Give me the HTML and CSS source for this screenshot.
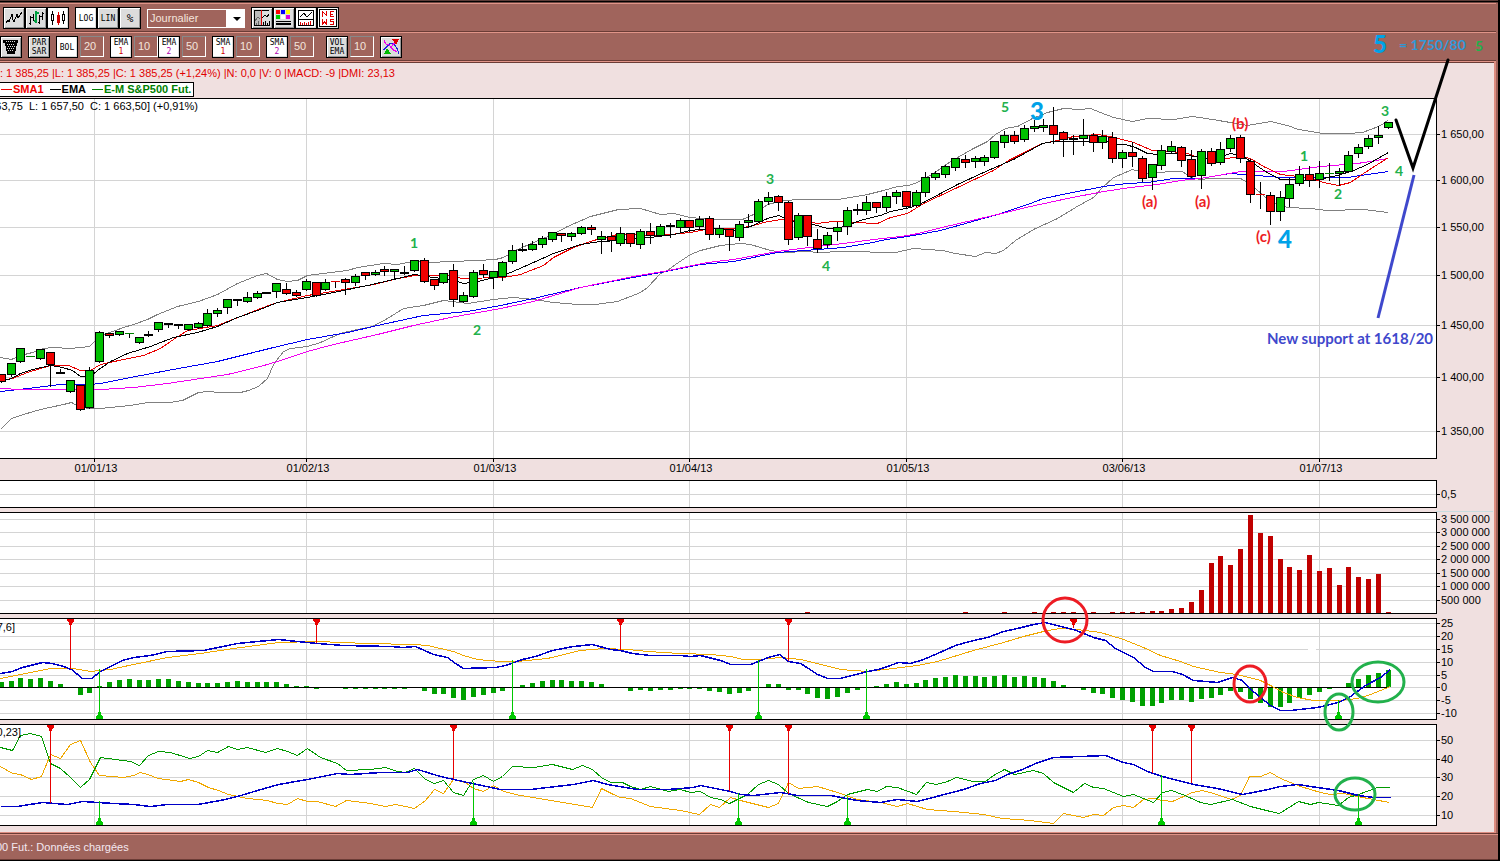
FILE: index.html
```
<!DOCTYPE html>
<html lang="fr">
<head>
<meta charset="utf-8">
<title>E-M S&amp;P500 Fut.</title>
<link rel="stylesheet" href="styles.css">
</head>
<body>
<div class="window">
  <header class="toolbars">
    <div class="toolbar">
      <div class="group">
        <button class="tool" aria-label="Ligne"><svg viewBox="0 0 18 18"><path class="k" d="M1 14l2-3 1 2 3-8 1 6 1 2 3-8 1 4 4-6"/></svg></button>
        <button class="tool" aria-label="Barres"><svg viewBox="0 0 18 18"><path class="k" d="M3.500 7v9M2 14h1M3 8h3M6.500 5v7M12.500 6v9M11 13h1M12 7h3M15.500 3v8M15 4h2"/><path class="g" d="M9 2v12M7 12h2M9 4h3"/></svg></button>
        <button class="tool on" aria-label="Chandeliers"><svg viewBox="0 0 18 18"><path class="k" d="M3.500 2v14M14.500 2v13"/><path class="k w" d="M2.500 5.500h2v6h-2zM13.500 5.500h2v6h-2z"/><path class="r" d="M9.500 3v13"/><path fill="#d00000" d="M8 6h3v8H8z"/></svg></button>
      </div>
      <div class="group">
        <button class="tool on">LOG</button><button class="tool">LIN</button><button class="tool"><span class="percent">%</span></button>
      </div>
      <label class="period"><select aria-label="Période"><option>Journalier</option></select></label>
      <div class="group">
        <button class="tool" aria-label="Curseur"><svg viewBox="0 0 18 18"><path fill="#bbb" d="M1 1h7v15H1z"/><path class="k" d="M1.500 1v15.500H17M1 1.500h15M9 9l3-3 2 2 2-3M10.500 16v-3M12.500 16v-4M14.500 16v-2M16.500 16v-4"/><path class="gr" d="M2 12l3-4 2 2M3.500 16v-2M5.500 16v-4"/><path class="r" d="M8.500 1v15"/></svg></button>
        <button class="tool" aria-label="Couleurs"><svg viewBox="0 0 18 18"><path fill="#f00" d="M1 1h4v4H1z"/><path fill="#00f" d="M6 1h4v4H6z"/><path fill="#ff0" d="M11 1h4v4h-4z"/><path fill="#0c0" d="M1 6h4v4H1z"/><path fill="#fff" d="M6 6h4v4H6z"/><path fill="#d0d" d="M11 6h4v4h-4z"/><path fill="#000" d="M1 12h15v1H1zM1 14h15v2H1z"/></svg></button>
        <button class="tool on" aria-label="Indicateurs"><svg viewBox="0 0 18 18"><path class="k" d="M1.500 1.500h15v15h-15zM1 10.500h16M3 8l4-4 3 4 5-5"/><path class="r" d="M3.500 16v-3M5.500 16v-2M7.500 16v-3M9.500 16v-2M11.500 16v-3M13.500 16v-4"/></svg></button>
        <button class="tool on" aria-label="News"><svg viewBox="0 0 18 18"><path class="k" d="M.5.5h17v17H.5z"/><path class="r" d="M3.500 8V2.500l4 4V2M15 2.500h-4v5h4M11 5.500h3M3.500 10v5l2-2 2 2v-5M15 10.500h-3.500v2h3v3H11"/></svg></button>
      </div>
    </div>
    <div class="toolbar">
      <button class="tool" aria-label="Supprimer"><svg viewBox="0 0 18 18"><path fill="#000" d="M1 2h15v3h-1l-2 11H5L3 5H1z"/><path stroke="#ddd" stroke-dasharray="1 1" d="M5 6.500h8M6 8.500h7M5 10.500h7M6 12.500h6M4 3.500h9"/></svg></button>
      <button class="tool"><span>PAR</span><span>SAR</span></button>
      <div class="pair"><button class="tool on">BOL</button><input value="20" aria-label="Bollinger"></div>
      <div class="group">
        <div class="pair"><button class="tool on"><span>EMA</span><span class="one">1</span></button><input value="10" aria-label="EMA 1"></div>
        <div class="pair"><button class="tool on"><span>EMA</span><span class="two">2</span></button><input value="50" aria-label="EMA 2"></div>
      </div>
      <div class="pair"><button class="tool on"><span>SMA</span><span class="one">1</span></button><input value="10" aria-label="SMA 1"></div>
      <div class="pair"><button class="tool on"><span>SMA</span><span class="two">2</span></button><input value="50" aria-label="SMA 2"></div>
      <div class="pair spaced"><button class="tool"><span>VOL</span><span>EMA</span></button><input value="10" aria-label="Volume EMA"></div>
      <button class="tool" aria-label="Signaux"><svg viewBox="0 0 18 18"><path stroke="#22d" d="M1 12c3-1 5-6 8-7 3 0 6 4 8 11"/><path stroke="#e0e" d="M2 2c2 7 4 3 6 6s4 6 7 5"/><path stroke="#e0e" d="M9 9l5-6"/><path fill="#e00000" d="M10 1h7l-3 6z"/><path fill="#0b0" d="M2 16l3-6 4 6z"/></svg></button>
    </div>
  </header>
  <main class="workspace">
    <div class="info">
      <p class="quote">: 1 385,25 |L: 1 385,25 |C: 1 385,25 (+1,24%) |N: 0,0 |V: 0 |MACD: -9 |DMI: 23,13</p>
      <p class="legend"><span class="key sma">SMA1</span><span class="key ema">EMA</span><span class="key fut">E-M S&amp;P500 Fut.</span></p>
    </div>
    <div class="charts">
      <svg id="price" viewBox="0 98 1494 382"></svg>
      <svg id="blank" viewBox="0 480 1494 32"></svg>
      <svg id="volume" viewBox="0 512 1494 106"></svg>
      <svg id="macd" viewBox="0 618 1494 106"></svg>
      <svg id="dmi" viewBox="0 724 1494 108"></svg>
      <svg class="notes" viewBox="0 98 1494 734">
        <g class="rings">
          <ellipse class="red" cx="1065" cy="620" rx="22" ry="22"/>
          <ellipse class="red" cx="1250" cy="684" rx="16" ry="18"/>
          <ellipse cx="1339" cy="712" rx="14" ry="18"/>
          <ellipse cx="1378" cy="682" rx="26" ry="20"/>
          <ellipse cx="1355" cy="794" rx="20" ry="16"/>
        </g>
        <path class="forecast" d="M1396 120l17 48 35-108"/>
        <path class="support" d="M1414 175l-36 143"/>
        <g class="minor">
          <text x="410" y="248">1</text><text x="473" y="335">2</text><text x="766" y="184">3</text><text x="822" y="271">4</text><text x="1001" y="112">5</text>
          <text x="1300" y="161">1</text><text x="1334" y="199">2</text><text x="1381" y="116">3</text><text x="1395" y="176">4</text><text x="1475" y="51">5</text>
        </g>
        <g class="abc">
          <text x="1142" y="207">(a)</text><text x="1195" y="207">(a)</text><text x="1232" y="129">(b)</text><text x="1256" y="242">(c)</text>
        </g>
        <g class="major">
          <text x="1030" y="120">3</text><text x="1278" y="248">4</text><text x="1373" y="53">5</text>
        </g>
        <text class="target" x="1399" y="50">= 1750/80</text>
        <text class="level" x="1267" y="344">New support at 1618/20</text>
      </svg>
    </div>
  </main>
  <footer class="status">00 Fut.: Données chargées</footer>
</div>
<script src="chart.js"></script>
</body>
</html>
```
FILE: styles.css
```
* { box-sizing: border-box; }
body { margin: 0; background: #5c3c38; font-family: "Liberation Sans", Arial, sans-serif; font-size: 11px; overflow-x: hidden; }
.window { min-height: 100vh; display: flex; flex-direction: column; border-right: 2px solid #000; border-bottom: 1px solid #000; background: #a0645c; overflow: hidden; }
.window::before { content: ""; height: 3px; background: linear-gradient(#5c3c38 0 1px, #000 1px 2px, #6b4540 2px); }
.toolbars { margin-right: 2px; border-bottom: 1px solid #e09488; }
.toolbar { height: 29px; display: flex; align-items: center; gap: 6px; padding-top: 1px; border-top: 1px solid #e09488; border-bottom: 1px solid #6b3c36; }
.toolbar:first-child { padding-left: 3px; }
.group { display: flex; }
.pair { display: flex; gap: 2px; }
.spaced { margin-left: 6px; }
.tool { width: 22px; height: 22px; padding: 0; display: flex; flex-direction: column; align-items: center; justify-content: center; border: 1px solid #000; background: #dcdcdc; box-shadow: inset 1px 1px #fff, inset -1px -1px #999; color: #000; font: 8px/9px "DejaVu Sans Mono", monospace; }
.tool.on { background: #fff; box-shadow: inset -1px -1px #ddd; }
.tool svg { width: 18px; height: 18px; fill: none; shape-rendering: crispEdges; }
.percent { font-size: 11px; }
.one { color: #d00000; }
.two { color: #b000b0; }
.k { stroke: #000; }
.w { fill: #fff; }
.r { stroke: #e00000; }
.g { stroke: #00a040; stroke-width: 2; }
.gr { stroke: #666; }
.pair input { width: 24px; height: 21px; padding: 0 0 2px 3px; border: 1px solid; border-color: #888 #fff #fff #888; background: #a0645c; color: #f4e4dc; font: 11px "Liberation Sans", Arial, sans-serif; }
.period { position: relative; display: flex; }
.period::after { content: ""; position: absolute; right: 4px; top: 8px; border: 4px solid transparent; border-top-color: #000; pointer-events: none; }
.period select { width: 98px; height: 19px; appearance: none; padding: 0 2px; border: 1px solid #fff; border-radius: 0; background: linear-gradient(90deg, #a0645c 0 78px, #fff 78px); color: #f4e4dc; font: 11px "Liberation Sans", Arial, sans-serif; }
.workspace { flex: 1; margin-right: 2px; border: solid #dc8c80; border-width: 0 2px 1px 0; background: #f0e0e0; }
.info { height: 36px; padding-top: 4px; border-top: 1px solid #6b3c36; }
.quote { margin: 0; line-height: 12px; color: #e00000; }
.legend { display: inline-flex; gap: 6px; margin: 3px 0 0; padding: 0 2px 0 1px; line-height: 13px; background: #fff; border: 1px solid #000; border-left: 0; font-weight: bold; }
.key { display: flex; align-items: center; gap: 1px; }
.key::before { content: ""; width: 11px; height: 1px; background: currentColor; }
.sma { color: #f00000; }
.ema { color: #000; }
.fut { color: #008000; }
.charts { position: relative; }
.charts svg { display: block; width: 100%; height: auto; font-size: 11px; }
.charts .notes { position: absolute; left: 0; top: 0; overflow: visible; pointer-events: none; font-family: Lato, sans-serif; font-weight: bold; font-size: 14px; }
.frame { fill: none; stroke: #000; shape-rendering: crispEdges; }
.paper { fill: #fff; }
.grid { fill: none; stroke: #d4d4d4; shape-rendering: crispEdges; }
.tick { fill: none; stroke: #000; shape-rendering: crispEdges; }
.ohlc { white-space: pre; }
.line { fill: none; shape-rendering: crispEdges; stroke-linejoin: round; }
.thick { stroke-width: 1.5; }
.candle { shape-rendering: crispEdges; }
.rings { fill: none; stroke: #22b14c; stroke-width: 3; }
.rings .red { stroke: #ed1c24; }
.forecast { fill: none; stroke: #000; stroke-width: 3; stroke-linecap: round; }
.support { fill: none; stroke: #3f48cc; stroke-width: 3; }
.minor { fill: #22b14c; }
.abc { fill: #ed1c24; font-size: 15px; }
.major { fill: #00a2e8; font-size: 24px; font-weight: 900; }
.target { fill: #2f98d8; }
.level { fill: #3f48cc; font-size: 15px; }
.status { height: 27px; padding-top: 1px; border-top: 1px solid #6b3c36; border-bottom: 1px solid #6b3c36; box-shadow: inset 0 1px #e09488; color: #f4e8f0; font-size: 11px; line-height: 25px; text-indent: -4px; }
```
FILE: chart.js
```
const NS = 'http://www.w3.org/2000/svg';
const RIGHT = 1436;
const MONTHS = [[94, '01/01/13'], [306, '01/02/13'], [493, '01/03/13'], [689, '01/04/13'], [906, '01/05/13'], [1122, '03/06/13'], [1319, '01/07/13']];
const dayX = i => Math.floor(99.68 + 9.836 * i);

function add(parent, tag, attrs, text) {
  const el = document.createElementNS(NS, tag);
  for (const k in attrs) el.setAttribute(k, attrs[k]);
  if (text) el.textContent = text;
  parent.appendChild(el);
  return el;
}

function panel(id, top, bottom, levels) {
  const svg = document.getElementById(id);
  add(svg, 'rect', { class: 'paper', x: 0, y: top, width: RIGHT, height: bottom - top });
  let d = '';
  MONTHS.forEach(([x]) => { d += `M${x + .5} ${top}V${bottom}`; });
  levels.forEach(([y]) => { d += `M0 ${y + .5}H${RIGHT}`; });
  add(svg, 'path', { class: 'grid', d });
  levels.forEach(([y, label]) => {
    add(svg, 'path', { class: 'tick', d: `M${RIGHT} ${y + .5}h4` });
    add(svg, 'text', { x: 1441, y: y + 4 }, label);
  });
  return svg;
}

function frame(svg, top, bottom) {
  add(svg, 'path', { class: 'frame', d: `M-1 ${top + .5}H${RIGHT + .5}V${bottom + .5}H-1` });
}

function line(svg, color, points, cls = '') {
  add(svg, 'polyline', { class: 'line ' + cls, stroke: color, points: points.trim().split(' ').map(p => p.split(',').map(n => +n + .5).join()).join(' ') });
}

function signals(svg, top, bottom, down, up) {
  down.forEach(([x, y]) => {
    add(svg, 'path', { class: 'tick', style: 'stroke:#e80000', d: `M${x + .5} ${top + 1}V${y}` });
    add(svg, 'path', { class: 'candle', fill: '#e80000', d: `M${x - 3} ${top + 1}h7v2l-2 2v2h-3v-2l-2-2z` });
  });
  up.forEach(([x, y]) => {
    add(svg, 'path', { class: 'tick', style: 'stroke:#00c800', d: `M${x + .5} ${y}V${bottom}` });
    add(svg, 'path', { class: 'candle', fill: '#00c800', d: `M${x - 3} ${bottom}h7v-2l-2-3v-2h-3v2l-2 3z` });
  });
}

/* Price: [colour, body top, body bottom, high, low], one entry per session */
const candles = `r374,382 g363,375,,376 g348,362 d356 g349,359 r352,365,,386 k372,,369 g380,392 r385,410 g370,408,367
g332,362,331 r333,336,,337 g331,335 d333,,,337 g337,343 k334,,331,336 g322,330,,331 k323,,,327 k324,,,328 g324,330
g323,328,322 g313,326,309 g310,314,308,316 g299,308,,313 k299,,,305 g297,302,292 g293,298,291 k292 g283,292,,297 r289,294,283
r292,296,290 g281,290,279 r282,296 g282,290,279 e281,,,287 r279,283,278,294 g276,283,274,285 r272,276,,279 g272,275,270 r269,272,266,275
g269,272,,278 k272,,266,274 g260,271 r260,282,258 r279,286,,289 g273,283 r270,300,264,306 g295,302,292 g272,297,270 r270,275,264,277
g271,278,,288 g262,277,261,280 g250,262,245,263 k249,,243,251 g244,250,241 g238,245,236,247 g232,240,,241 r233,236,,241 g233,237,232,240 g227,234,226
r227,230,225,234 g236,240,231,253 r236,241,232,251 g233,244,227,245 r233,244,,246 g231,245,229,248 r231,236,223,243 g226,236,224 k225,,223,237 g220,228,218,232
r220,228,,231 g219,227,216,228 r218,235,216,239 g228,235,225,237 r229,237,,250 g224,238,221,240 g220,223,214,227 g201,222,199 g197,202,192,204 r196,203,195,210
r202,240,201,244 g215,238,213,239 r215,237,,245 r239,249,229,252 g235,245,232,247 g227,232,222,240 g210,227,207,234 k209,,204,214 g202,211,196,214 r202,208,,212
g196,208,192,211 g192,197,190,203 r191,207 g192,206,190 g177,193,172,196 g173,178,171,179 g166,175,165,177 g158,168,,170 r159,163,155,167 g158,162,156,167
g157,162,155,165 g141,158 g135,143,131,147 r135,142,131,143 g128,140,125,141 g126,129,120,131 g125,128,119,131 r125,135,107,143 r132,140,131,156 k138,,135,154
g135,139,119,145 r135,143,133,151 g136,143,130,148 r137,159,132,162 g152,159,150,167 r152,157,142,166 r158,179,156,181 g164,178,,189 g150,166,145,169 g146,152,141,153
r147,161,146,166 r159,177,150 g151,176,149,188 r151,164,148,165 g149,163,142,164 g138,149,135,151 r137,159,135,162 r161,195,159,202 e194,,182,208 r195,212,192,224
g197,212,191,220 g184,199,178,206 g174,184,166,185 r174,181,166,186 g173,180,161,187 d173,,163,180 g171,174,168,185 g155,172,151 g147,154,144,157 g138,147,135,148
g135,138,126,143 g122,128`.split(/\s+/).map(s => [s[0], ...s.slice(1).split(',').map(n => n ? +n : null)]);

const price = panel('price', 98, 458, [[134, '1 650,00'], [180, '1 600,00'], [227, '1 550,00'], [275, '1 500,00'], [325, '1 450,00'], [377, '1 400,00'], [431, '1 350,00']]);
MONTHS.forEach(([x, label]) => {
  add(price, 'path', { class: 'tick', d: `M${x + .5} 459v3` });
  add(price, 'text', { x: x + 2, y: 472, 'text-anchor': 'middle' }, label);
});
add(price, 'text', { class: 'ohlc', x: 198, y: 110, 'text-anchor': 'end' }, '63,75  L: 1 657,50  C: 1 663,50] (+0,91%)');
line(price, '#808080', '0,357 11,359 20,355 32,352 43,348 53,347 70,348 80,347 89,346 100,335 115,330 123,327 133,324 147,319 157,314 177,306 198,301 217,294 237,283 257,275 266,273 277,279 287,281 297,280 307,275 330,272 347,270 357,267 383,263 397,264 413,261 430,262 450,261 477,260 495,259 503,257 515,250 533,242 550,235 567,226 590,216 618,209 640,208 660,214 673,213 690,217 712,219 742,219 753,214 767,204 783,200 800,199 838,199 867,194 883,190 897,186 908,185 917,182 933,173 950,161 973,148 987,141 995,134 1005,128 1017,126 1032,118 1047,112 1063,108 1080,109 1090,108 1100,112 1113,117 1132,121 1147,118 1173,119 1192,116 1212,119 1230,122 1247,125 1270,121 1287,125 1298,129 1323,133 1347,133 1362,132 1373,128 1382,124 1388,119');
line(price, '#808080', '0,429 11,418 23,414 40,409 63,404 71,402 80,407 90,408 100,408 130,405 147,402 170,402 182,400 198,392 207,391 220,392 240,392 248,390 258,386 267,378 273,364 283,351 290,348 307,346 320,342 333,336 343,332 372,326 387,318 403,308 423,305 443,300 467,303 493,299 513,297 533,299 553,302 577,304 595,304 617,301 630,296 640,292 647,287 660,273 667,270 675,264 690,254 700,250 720,245 740,243 750,244 770,250 783,252 807,251 817,252 843,251 895,252 913,248 942,250 955,253 975,256 985,252 995,253 1003,250 1015,240 1033,229 1057,218 1075,207 1093,197 1102,187 1113,177 1132,169 1147,173 1170,171 1182,171 1190,177 1200,179 1210,178 1240,178 1247,182 1255,188 1265,197 1277,204 1287,207 1310,208 1327,210 1363,209 1388,212');
line(price, '#0000f0', '0,391 27,388 60,384 90,384 100,383 130,377 167,370 217,361 273,347 307,339 347,332 377,325 423,315 467,311 500,305 533,298 580,287 627,278 660,272 700,264 733,261 777,252 817,249 843,247 873,242 880,240 913,235 940,230 972,221 997,214 1030,203 1043,198 1067,193 1103,186 1127,183 1147,182 1173,178 1200,178 1230,173 1257,175 1280,177 1347,177 1360,175 1388,171');
line(price, '#f000f0', '0,388 20,389 100,389 133,387 167,383 200,378 227,374 260,366 277,361 307,351 333,344 377,334 413,325 450,317 500,308 533,301 580,287 633,276 663,271 707,262 733,259 777,251 817,246 843,243 873,239 900,236 913,234 950,225 997,214 1030,206 1067,198 1103,191 1130,187 1157,184 1180,180 1200,178 1223,174 1240,171 1283,171 1320,166 1357,163 1388,158');
line(price, '#e80000', '0,380 12,378 27,372 50,365 68,365 80,370 90,370 100,364 123,359 143,355 160,348 173,339 187,330 200,328 217,325 240,316 260,308 277,302 307,295 350,288 373,284 393,279 414,275 447,275 462,278 503,277 520,274 543,265 553,257 573,247 593,240 617,234 660,235 690,232 710,228 733,228 750,226 763,222 780,219 800,220 817,223 833,221 853,222 877,223 890,217 907,213 923,203 957,187 993,170 1008,160 1042,143 1057,140 1073,136 1097,134 1110,136 1133,142 1152,150 1170,151 1187,153 1200,158 1220,159 1240,156 1250,158 1263,166 1280,174 1307,177 1323,182 1338,185 1350,182 1363,173 1388,157');
line(price, '#000', '0,381 11,378 20,373 32,369 50,365 62,367 72,370 80,376 90,376 97,370 110,361 127,353 150,346 173,337 197,332 217,326 237,317 257,310 277,302 307,297 333,292 367,285 393,279 414,274 433,277 450,279 463,283 477,281 503,275 517,269 533,262 553,253 580,244 600,241 620,240 650,237 673,234 690,230 710,228 733,230 750,226 767,218 778,215 790,220 813,224 827,228 840,227 863,219 880,215 890,211 910,207 923,202 957,184 983,172 1013,159 1042,143 1053,141 1110,141 1117,144 1125,144 1135,147 1147,153 1157,154 1170,153 1183,154 1200,157 1213,159 1230,153 1243,156 1253,163 1265,171 1280,179 1313,180 1337,175 1353,170 1367,164 1388,152');
const ink = { r: '#f00000', g: '#00c000', k: '#000', d: '#008000', e: '#e00000' };
candles.forEach(([c, top, bottom, high, low], n) => {
  const x = dayX(n - 10);
  const end = bottom || top;
  add(price, 'path', { class: 'tick', d: `M${x + .5} ${high || top}V${(low || end) + 1}` });
  if (bottom) add(price, 'rect', { class: 'candle', x: x - 3.5, y: top + .5, width: 8, height: bottom - top - 1 || 1, fill: ink[c], stroke: '#000' });
  else add(price, 'rect', { class: 'candle', x: x - 4, y: top, width: 9, height: c === 'k' ? 2 : 1, fill: ink[c] });
});
frame(price, 98, 458);

frame(panel('blank', 480, 507, [[494, '0,5']]), 480, 507);
add(document.getElementById('blank'), 'path', { d: 'M1436 511.5H1493', stroke: '#c8dce0' });

const volume = panel('volume', 512, 613, [[519, '3 500 000'], [532, '3 000 000'], [546, '2 500 000'], [559, '2 000 000'], [573, '1 500 000'], [586, '1 000 000'], [600, '500 000']]);
const bar = (svg, i, y, h, fill) => add(svg, 'rect', { x: dayX(i) - 2, y, width: 5, height: h, fill });
[72, 88, 92, 95, 97, 98, 99, 101, 103, 104, 105, 106].forEach(i => bar(volume, i, 612, 1, '#c00000'));
[611, 611, 609, 608, 602, 590, 563, 556, 565, 549, 515, 533, 536, 559, 567, 570, 555, 571, 568, 585, 567, 577, 579, 574, 612].forEach((y, n) => bar(volume, 107 + n, y, 613 - y, '#c00000'));
frame(volume, 512, 613);

const macd = panel('macd', 618, 719, [[623, '25'], [636, '20'], [649, '15'], [662, '10'], [675, '5'], [687, '0'], [700, '-5'], [713, '-10']]);
add(macd, 'rect', { class: 'paper', x: 1308, y: 649, width: 8, height: 1 });
[5, 6, 9, 8, 9, 6, 3, 0, -7, -5, 1, 5, 7, 8, 7, 7, 8, 8, 6, 5, 4, 4, 4, 5, 6, 5, 5, 5, 5, 3, 1, 1, -1, 0, 0, -1, -1, -1, -1, -1, -1, -1, 0, -3, -6, -6, -10, -12, -9, -7, -5, -3, 0, 2, 4, 6, 7, 7, 6, 6, 5, 3, 0, 0, -3, -2, -3, -2, -2, -1, -1, -1, -3, -4, -6, -5, -3, 0, 3, 3, -2, -2, -6, -10, -11, -9, -5, -2, 0, 1, 3, 5, 3, 4, 7, 9, 10, 12, 11, 11, 10, 11, 12, 10, 11, 10, 9, 6, 2, 0, -2, -5, -6, -10, -12, -14, -18, -18, -15, -12, -12, -14, -11, -10, -7, -3, -4, -11, -15, -19, -19, -15, -10, -7, -4, -1, 0, 4, 8, 12, 14, 17]
  .forEach((v, n) => { if (v) bar(macd, n - 10, v > 0 ? 687 - v : 688, Math.abs(v), '#00a000'); });
add(macd, 'path', { class: 'tick', d: 'M0 687.5H1388' });
line(macd, '#f0a800', '0,678 20,674 50,668 72,668 90,671 110,669 133,664 167,657 200,653 233,648 278,642 317,641 367,643 413,644 427,645 453,651 463,655 477,659 500,661 517,661 547,658 580,650 603,648 627,649 647,651 680,653 710,654 730,656 743,659 760,659 780,657 800,659 817,663 840,669 867,671 893,668 917,665 937,661 973,650 1003,642 1023,636 1047,630 1060,628 1077,629 1100,632 1123,639 1143,647 1160,655 1180,661 1193,666 1220,672 1237,674 1260,680 1270,685 1283,692 1297,697 1313,700 1340,700 1357,698 1370,694 1390,686');
line(macd, '#0000c8', '0,673 12,671 22,667 42,662 52,663 63,666 71,669 82,678 91,678 100,671 122,660 133,657 150,655 167,651 203,650 237,643 278,639 297,641 307,642 317,643 343,645 390,646 402,647 415,646 433,654 447,657 455,663 463,668 495,667 505,665 522,659 535,656 552,650 573,646 592,644 610,649 620,650 632,653 650,655 680,655 690,656 700,655 720,660 730,664 750,664 768,657 779,654 788,661 800,663 808,668 817,674 827,678 840,678 867,671 878,669 887,666 898,662 910,663 923,659 937,653 955,645 973,640 987,637 1003,631 1017,628 1033,624 1045,622 1060,626 1073,629 1093,637 1105,640 1115,648 1133,657 1145,667 1153,671 1172,671 1182,674 1193,680 1217,682 1232,677 1242,680 1248,687 1260,697 1270,705 1280,710 1290,710 1317,707 1338,702 1350,696 1365,685 1380,677 1390,669', 'thick');
signals(macd, 618, 719, [[70, 669], [316, 643], [620, 650], [788, 661], [1073, 628]], [[99, 669], [512, 660], [758, 660], [866, 669], [1338, 700]]);
add(macd, 'text', { x: 15, y: 631, 'text-anchor': 'end' }, '7,6]');
frame(macd, 618, 719);

const dmi = panel('dmi', 724, 825, [[740, '50'], [759, '40'], [777, '30'], [796, '20'], [815, '10']]);
line(dmi, '#f0a800', '0,766 12,773 20,774 31,779 41,776 50,754 60,758 70,744 80,740 90,762 99,775 123,777 133,775 140,772 147,774 158,778 180,781 188,779 198,782 208,787 218,790 228,794 247,798 267,800 277,803 287,804 297,798 307,801 317,801 335,806 346,800 370,803 385,806 395,804 405,806 414,808 425,800 434,789 443,793 453,779 465,782 473,788 483,791 493,785 503,791 520,795 550,800 592,807 601,788 613,794 620,797 630,798 650,806 680,810 699,814 710,804 719,807 730,797 740,800 768,807 778,803 788,782 798,788 817,786 837,792 857,799 880,802 897,806 907,803 927,809 953,811 983,814 1002,818 1030,820 1045,822 1053,823 1063,813 1083,817 1093,814 1103,815 1113,807 1123,805 1133,807 1143,799 1153,798 1162,800 1172,801 1192,792 1202,790 1213,793 1231,799 1240,795 1249,776 1260,776 1270,772 1280,778 1300,786 1320,792 1330,794 1343,793 1357,796 1389,802');
line(dmi, '#009a00', '0,747 12,750 20,735 30,733 41,736 50,763 60,768 70,777 80,787 89,779 100,757 130,761 139,765 148,755 158,751 170,752 189,758 198,756 207,750 217,752 228,746 237,749 247,747 265,752 277,748 287,751 297,755 307,748 320,757 337,763 346,770 370,769 385,767 397,771 405,772 414,768 425,779 434,783 443,780 453,792 463,795 473,779 483,775 493,781 502,776 512,766 533,767 552,764 572,769 582,765 592,769 602,778 611,782 622,782 630,786 640,789 650,786 668,791 680,789 690,792 700,791 710,797 720,799 729,803 747,794 758,784 768,780 778,784 788,793 808,802 827,806 837,801 847,794 867,789 877,791 886,786 897,787 916,794 926,782 936,784 947,781 956,777 973,781 985,781 993,775 1004,769 1014,774 1033,770 1043,773 1053,782 1063,787 1073,792 1084,783 1093,787 1103,788 1113,792 1123,796 1133,794 1143,798 1153,802 1162,792 1171,790 1182,794 1200,802 1210,804 1232,799 1250,806 1270,811 1279,813 1298,801 1310,804 1318,802 1338,805 1348,797 1358,794 1377,787 1389,787');
line(dmi, '#0000c8', '0,806 17,806 42,802 67,804 82,801 113,803 133,804 150,806 167,804 197,804 220,800 237,796 257,790 278,784 307,779 337,773 350,774 380,772 407,772 417,769 440,776 467,782 500,789 530,789 573,784 593,780 607,784 637,789 667,789 693,787 700,785 730,791 740,794 753,795 780,792 797,795 830,795 857,800 880,802 897,799 917,801 940,795 963,789 980,783 995,780 1007,774 1022,769 1035,763 1053,757 1080,756 1105,755 1123,762 1133,764 1147,771 1162,776 1193,784 1217,788 1242,794 1263,790 1280,786 1297,784 1317,787 1338,790 1358,795 1373,797 1390,797', 'thick');
signals(dmi, 724, 825, [[50, 803], [453, 779], [729, 791], [788, 794], [1152, 773], [1191, 783]], [[99, 801], [473, 782], [738, 793], [847, 797], [1161, 775], [1358, 795]]);
add(dmi, 'text', { x: 21, y: 736, 'text-anchor': 'end' }, '0,23]');
frame(dmi, 724, 825);
```
